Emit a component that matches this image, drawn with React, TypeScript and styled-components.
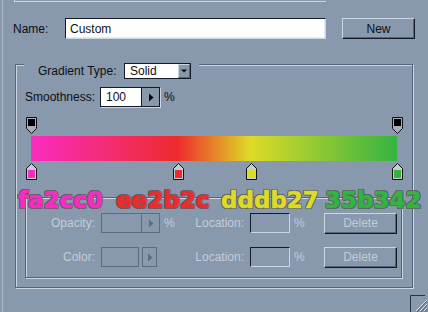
import React from "react";
import styled, { createGlobalStyle } from "styled-components";

const C = {
  bg: "#8898ad",
  light: "#ccd5e2",
  shadow: "#56637a",
  dark: "#141a26",
  dis: "#c3ccd9",
  disBorder: "#5e6b81",
  text: "#0d0f14",
};

const Global = createGlobalStyle`
  html, body { margin: 0; padding: 0; background: ${C.bg}; }
  body {
    width: 428px; height: 312px; overflow: hidden;
    font-family: "Liberation Sans", Arial, sans-serif;
    font-size: 12px; color: ${C.text};
  }
  * { box-sizing: border-box; }
`;

const Window = styled.div`
  width: 426px;
  height: 312px;
  margin-left: 2px;
  border-left: 1px solid #aebacb;
  display: flex;
  flex-direction: column;
`;

const ListStub = styled.div`
  margin-left: 11px;
  width: 312px;
  height: 2px;
  border-left: 1px solid ${C.light};
  border-bottom: 1px solid ${C.light};
`;

const NameRow = styled.div`
  display: flex;
  align-items: center;
  margin-top: 16px;
  padding-left: 10px;
  height: 21px;
`;

const Label = styled.span<{ $w?: number; $right?: boolean; $disabled?: boolean }>`
  display: inline-block;
  width: ${(p) => (p.$w ? `${p.$w}px` : "auto")};
  text-align: ${(p) => (p.$right ? "right" : "left")};
  color: ${(p) => (p.$disabled ? C.dis : C.text)};
  white-space: nowrap;
  flex-shrink: 0;
`;

const TextField = styled.div<{ $w: number; $h: number }>`
  width: ${(p) => p.$w}px;
  height: ${(p) => p.$h}px;
  background: #fff;
  border-top: 1px solid ${C.dark};
  border-left: 1px solid ${C.dark};
  border-right: 1px solid ${C.light};
  border-bottom: 1px solid ${C.light};
  box-shadow: inset -1px -1px 0 #e8ecf2;
  padding-left: 4px;
  display: flex;
  align-items: center;
  flex-shrink: 0;
`;

const Button = styled.div<{ $disabled?: boolean; $w: number; $ml?: number }>`
  width: ${(p) => p.$w}px;
  height: 21px;
  margin-left: ${(p) => p.$ml ?? 0}px;
  border-top: 1px solid ${C.light};
  border-left: 1px solid ${C.light};
  border-right: 1px solid ${C.dark};
  border-bottom: 1px solid ${C.dark};
  box-shadow: inset -1px -1px 0 ${C.shadow};
  display: flex;
  align-items: center;
  justify-content: center;
  color: ${(p) => (p.$disabled ? C.dis : C.text)};
  flex-shrink: 0;
`;

const Group = styled.div`
  margin: 25px 0 0 12px;
  width: 398px;
  border: 1px solid ${C.shadow};
  box-shadow: inset 1px 1px 0 ${C.light}, 1px 1px 0 ${C.light};
  display: flex;
  flex-direction: column;
  padding-bottom: 9px;
`;

const GroupHeader = styled.div`
  align-self: flex-start;
  margin: -2px 0 0 8px;
  padding: 0 8px 0 14px;
  height: 16px;
  background: ${C.bg};
  display: flex;
  align-items: center;
`;

const Select = styled.div`
  width: 67px;
  height: 16px;
  background: #fff;
  border: 1px solid ${C.dark};
  display: flex;
  align-items: stretch;
`;

const SelectValue = styled.span`
  flex: 1;
  padding-left: 5px;
  line-height: 14px;
`;

const SelectButton = styled.div`
  width: 12px;
  background: ${C.bg};
  border-top: 1px solid ${C.light};
  border-left: 1px solid ${C.light};
  border-right: 1px solid ${C.shadow};
  border-bottom: 1px solid ${C.shadow};
  display: flex;
  align-items: center;
  justify-content: center;
`;

const SmoothRow = styled.div`
  display: flex;
  align-items: center;
  height: 20px;
  margin: 8px 0 0 9px;
`;

const Spin = styled.div`
  width: 60px;
  height: 20px;
  display: flex;
  border: 1px solid ${C.dark};
  box-shadow: 1px 1px 0 ${C.light};
`;

const SpinField = styled.div`
  flex: 1;
  background: #fff;
  padding-left: 5px;
  display: flex;
  align-items: center;
`;

const SpinArrow = styled.div<{ $disabled?: boolean }>`
  width: 18px;
  border-left: 1px solid ${(p) => (p.$disabled ? C.disBorder : C.dark)};
  background: ${C.bg};
  display: flex;
  align-items: center;
  justify-content: center;
`;

const Pct = styled.span<{ $disabled?: boolean }>`
  width: 12px;
  margin-left: 4px;
  color: ${(p) => (p.$disabled ? C.dis : C.text)};
  flex-shrink: 0;
`;

const StopsArea = styled.div`
  margin: 10px 0 0 15px;
  width: 366px;
  display: flex;
  flex-direction: column;
`;

const StopTrack = styled.div<{ $mt: number }>`
  position: relative;
  height: 17px;
  margin-top: ${(p) => p.$mt}px;
`;

const StopMark = styled.div`
  position: absolute;
  top: 0;
  width: 11px;
  height: 17px;
  display: flex;
`;

const Bar = styled.div`
  height: 25px;
  margin-top: 2px;
  background: linear-gradient(to right, #fa2cc0 0%, #ee2b2c 40%, #dddb27 60%, #35b342 100%);
`;

const InnerGroup = styled.div`
  position: relative;
  margin: 17px 0 0 9px;
  width: 377px;
  border: 1px solid ${C.shadow};
  box-shadow: inset 1px 1px 0 ${C.light}, 1px 1px 0 ${C.light};
  padding: 15px 0 10px 0;
  display: flex;
  flex-direction: column;
  gap: 14px;
`;

const StopRow = styled.div`
  display: flex;
  align-items: center;
  height: 20px;
`;

const ControlCell = styled.div`
  width: 75px;
  height: 20px;
  margin-left: 6px;
  display: flex;
  align-items: center;
  flex-shrink: 0;
`;

const DisabledSpin = styled.div`
  width: 59px;
  height: 20px;
  border: 1px solid ${C.disBorder};
  display: flex;
`;

const DisabledField = styled.div`
  flex: 1;
`;

const ColorSwatch = styled.div`
  width: 38px;
  height: 20px;
  border: 1px solid ${C.disBorder};
`;

const ArrowButton = styled.div`
  width: 15px;
  height: 20px;
  margin-left: 3px;
  border: 1px solid ${C.disBorder};
  display: flex;
  align-items: center;
  justify-content: center;
`;

const LocCell = styled.div`
  width: 56px;
  margin-left: 6px;
  display: flex;
  align-items: center;
  flex-shrink: 0;
`;

const LocField = styled.div`
  width: 40px;
  height: 20px;
  border-top: 1px solid ${C.dark};
  border-left: 1px solid ${C.dark};
  border-right: 1px solid ${C.light};
  border-bottom: 1px solid ${C.light};
`;

const Annotations = styled.div`
  position: absolute;
  top: -9px;
  left: -8px;
  display: grid;
  grid-template-columns: 98px 105px 104px auto;
  pointer-events: none;
`;

const Hex = styled.span<{ $c: string }>`
  font-family: "DejaVu Sans", Verdana, sans-serif;
  font-weight: bold;
  font-size: 23px;
  line-height: 23px;
  color: ${(p) => p.$c};
  -webkit-text-stroke: 0.7px ${(p) => p.$c};
  white-space: nowrap;
  text-shadow:
    1px 0 0 #5b5e66, -1px 0 0 #5b5e66, 0 1px 0 #5b5e66, 0 -1px 0 #5b5e66,
    1px 1px 0 #5b5e66, -1px -1px 0 #5b5e66, 1px -1px 0 #5b5e66, -1px 1px 0 #5b5e66;
`;

const GripRow = styled.div`
  margin-top: auto;
  align-self: flex-end;
  width: 18px;
  height: 17px;
  display: flex;
`;

const TriRight = ({ color }: { color: string }) => (
  <svg width="6" height="9" viewBox="0 0 6 9">
    <path d="M1 0.5L5.5 4.5L1 8.5Z" fill={color} />
  </svg>
);

const TriDown = () => (
  <svg width="6" height="4" viewBox="0 0 6 4">
    <path d="M0 0.5H6L3 3.5Z" fill="#000" />
  </svg>
);

const OpacityStop = () => (
  <svg width="11" height="17" viewBox="0 0 11 17">
    <path d="M0.5 0.5H10.5V11.5L5.5 16.5L0.5 11.5Z" fill="#a4aebd" stroke="#101010" />
    <rect x="2" y="2" width="7" height="7" fill="#000" />
  </svg>
);

const ColorStop = ({ color }: { color: string }) => (
  <svg width="11" height="17" viewBox="0 0 11 17">
    <path d="M5.5 0.5L10.5 5.5V16.5H0.5V5.5Z" fill="#c7cdd7" stroke="#101010" />
    <rect x="2" y="7" width="7" height="8" fill={color} />
  </svg>
);

const Grip = () => (
  <svg width="18" height="17" viewBox="0 0 18 17">
    <path d="M0.5 17V0.5H15" stroke="#2a3242" fill="none" />
    <path d="M17 5L6 16M17 9L10 16M17 13L14 16" stroke="#dfe5ee" />
    <path d="M17 6L7 17M17 10L11 17M17 14L15 17" stroke="#4e5a6e" />
  </svg>
);

const colorStops = [
  { pos: 0, color: "#fa2cc0" },
  { pos: 40.2, color: "#ee2b2c" },
  { pos: 60.1, color: "#dddb27" },
  { pos: 100, color: "#35b342" },
];

const opacityStops = [0, 100];

const labels = [
  { text: "fa2cc0", color: "#fa2cc0" },
  { text: "ee2b2c", color: "#ee2b2c" },
  { text: "dddb27", color: "#dddb27" },
  { text: "35b342", color: "#35b342" },
];

export default function App() {
  return (
    <>
      <Global />
      <Window>
        <ListStub />
        <NameRow>
          <Label $w={52}>Name:</Label>
          <TextField $w={261} $h={21}>Custom</TextField>
          <Button $w={73} $ml={16}>New</Button>
        </NameRow>

        <Group>
          <GroupHeader>
            <Label $w={86}>Gradient Type:</Label>
            <Select>
              <SelectValue>Solid</SelectValue>
              <SelectButton>
                <TriDown />
              </SelectButton>
            </Select>
          </GroupHeader>

          <SmoothRow>
            <Label $w={75}>Smoothness:</Label>
            <Spin>
              <SpinField>100</SpinField>
              <SpinArrow>
                <TriRight color="#000" />
              </SpinArrow>
            </Spin>
            <Pct>%</Pct>
          </SmoothRow>

          <StopsArea>
            <StopTrack $mt={0}>
              {opacityStops.map((p) => (
                <StopMark key={p} style={{ left: `calc(${p}% - 5px)` }}>
                  <OpacityStop />
                </StopMark>
              ))}
            </StopTrack>
            <Bar />
            <StopTrack $mt={2}>
              {colorStops.map((s) => (
                <StopMark key={s.color} style={{ left: `calc(${s.pos}% - 5px)` }}>
                  <ColorStop color={s.color} />
                </StopMark>
              ))}
            </StopTrack>
          </StopsArea>

          <InnerGroup>
            <Annotations>
              {labels.map((l) => (
                <Hex key={l.text} $c={l.color}>
                  {l.text}
                </Hex>
              ))}
            </Annotations>
            <StopRow>
              <Label $w={69} $right $disabled>
                Opacity:
              </Label>
              <ControlCell>
                <DisabledSpin>
                  <DisabledField />
                  <SpinArrow $disabled>
                    <TriRight color={C.disBorder} />
                  </SpinArrow>
                </DisabledSpin>
                <Pct $disabled>%</Pct>
              </ControlCell>
              <Label $w={68} $right $disabled>
                Location:
              </Label>
              <LocCell>
                <LocField />
                <Pct $disabled>%</Pct>
              </LocCell>
              <Button $w={73} $ml={18} $disabled>
                Delete
              </Button>
            </StopRow>
            <StopRow>
              <Label $w={69} $right $disabled>
                Color:
              </Label>
              <ControlCell>
                <ColorSwatch />
                <ArrowButton>
                  <TriRight color={C.disBorder} />
                </ArrowButton>
              </ControlCell>
              <Label $w={68} $right $disabled>
                Location:
              </Label>
              <LocCell>
                <LocField />
                <Pct $disabled>%</Pct>
              </LocCell>
              <Button $w={73} $ml={18} $disabled>
                Delete
              </Button>
            </StopRow>
          </InnerGroup>
        </Group>

        <GripRow>
          <Grip />
        </GripRow>
      </Window>
    </>
  );
}
